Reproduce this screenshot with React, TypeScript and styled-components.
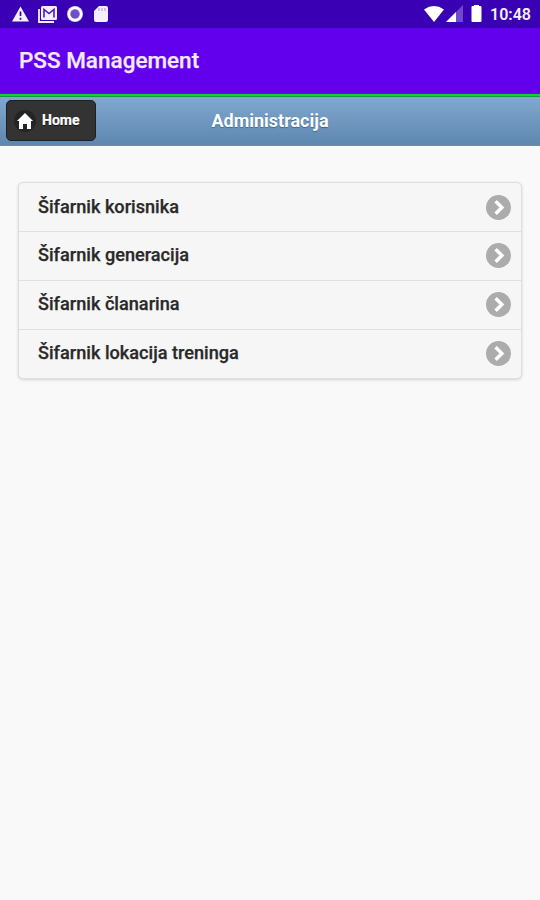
import React from "react";
import styled, { createGlobalStyle } from "styled-components";

const GlobalStyle = createGlobalStyle`
  * { box-sizing: border-box; }
  body {
    margin: 0;
    background: #f9f9f9;
    font-family: Roboto, "Liberation Sans", sans-serif;
  }
`;

const Screen = styled.div`
  min-height: 900px;
  display: flex;
  flex-direction: column;
  background: #f9f9f9;
`;

const StatusBar = styled.div`
  height: 28px;
  flex: none;
  display: flex;
  align-items: center;
  justify-content: space-between;
  padding: 0 9px 0 11px;
  background: #3a00b4;
  color: #f4efff;
`;

const StatusIcons = styled.div`
  display: flex;
  align-items: center;
  gap: 8px;

  svg { display: block; }
`;

const SystemIcons = styled(StatusIcons)`
  gap: 2px;
`;

const Clock = styled.span`
  font-size: 16px;
  line-height: 28px;
  font-weight: 600;
  width: 41px;
  margin-left: 5px;
  padding-top: 1px;
  white-space: nowrap;
`;

const AppBar = styled.header`
  height: 65px;
  flex: none;
  display: flex;
  align-items: center;
  padding: 0 19px 2px;
  background: #6200ee;
`;

const AppTitle = styled.h1`
  margin: 0;
  color: #f3eaff;
  font-size: 22.5px;
  line-height: 28px;
  font-weight: 500;
  -webkit-text-stroke: 0.25px #f3eaff;
`;

const AccentLine = styled.div`
  height: 4px;
  flex: none;
  background: linear-gradient(#3b2bb0 0 1px, #0dd430 1px 3px, #0c9a45 3px);
`;

const PageHeader = styled.div`
  height: 49px;
  flex: none;
  display: grid;
  grid-template-columns: 1fr auto 1fr;
  align-items: center;
  padding: 0 6px 1px;
  border-bottom: 1px solid #7c8b99;
  background: linear-gradient(#81a8ce, #5e87b0);
`;

const HomeButton = styled.button`
  width: 90px;
  height: 41px;
  display: flex;
  align-items: center;
  gap: 6px;
  padding: 0 0 0 7px;
  border: 1px solid #1f1f1f;
  border-radius: 5px;
  background: #333;
  color: #fff;
  font: 700 14px Roboto, sans-serif;
  text-shadow: 0 1px 0 #111;
  -webkit-text-stroke: 0.2px #fff;
`;

const HomeLabel = styled.span`
  padding-bottom: 2px;
`;

const HomeIcon = styled.span`
  width: 22px;
  height: 22px;
  display: grid;
  place-items: center;
  border-radius: 50%;
  background: #242424;
`;

const PageTitle = styled.h2`
  margin: 0;
  color: #fff;
  font-size: 18px;
  line-height: 24px;
  font-weight: 700;
  text-shadow: 0 1px 1px #3e6790;
`;

const List = styled.ul`
  margin: 36px 18px 0;
  padding: 0;
  list-style: none;
  border: 1px solid #dedede;
  border-radius: 5px;
  background: #f6f6f6;
  box-shadow: 0 1px 3px rgba(0, 0, 0, 0.15);
`;

const ListRow = styled.li<{ $height: number }>`
  height: ${(p) => p.$height}px;
  display: flex;
  align-items: center;
  justify-content: space-between;
  padding: 0 10px 2px 19px;
  color: #292929;
  font-size: 18.15px;
  font-weight: 500;
  -webkit-text-stroke: 0.25px #292929;
  text-shadow: 0 1px 0 #f3f3f3;

  & + & {
    border-top: 1px solid #e0e0e0;
    padding-bottom: 3px;
  }
`;

const Chevron = styled.span`
  width: 25px;
  height: 25px;
  margin-top: 2px;
  display: grid;
  place-items: center;
  border-radius: 50%;
  background: #acacac;
`;

const rows = [
  { label: "Šifarnik korisnika", height: 48 },
  { label: "Šifarnik generacija", height: 49 },
  { label: "Šifarnik članarina", height: 49 },
  { label: "Šifarnik lokacija treninga", height: 49 },
];

export default function App() {
  return (
    <Screen>
      <GlobalStyle />
      <StatusBar>
        <StatusIcons>
          <svg width="19" height="20" viewBox="0 0 19 20">
            <path d="M9.5 2.5 18 17.5H1Z" fill="currentColor" />
            <path d="M9.5 7.5v4.5M9.5 13.7v2" stroke="#3a00b4" strokeWidth="1.7" />
          </svg>
          <svg width="20" height="20" viewBox="0 0 20 20">
            <path d="M1 5v13h15" fill="none" stroke="currentColor" strokeWidth="1.8" />
            <rect x="3" y="2" width="16" height="14" rx="1.5" fill="currentColor" />
            <path d="M6 13.5V5.5l5 4 5-4v8" fill="none" stroke="#4b1bbb" strokeWidth="1.6" />
          </svg>
          <svg width="18" height="20" viewBox="0 0 18 20">
            <circle cx="9" cy="10" r="8" fill="#c6b7ef" />
            <circle cx="9" cy="10" r="6.2" fill="none" stroke="#fff" strokeWidth="2.4" />
            <circle cx="9" cy="10" r="4.5" fill="#6f4ec9" />
          </svg>
          <svg width="17" height="20" viewBox="0 0 17 20">
            <path d="M7 2h7a2 2 0 0 1 2 2v12a2 2 0 0 1-2 2H4a2 2 0 0 1-2-2V7Z" fill="currentColor" />
            <path d="M7 4v3M10 4v3M13 4v3" stroke="#b5a2e5" strokeWidth="1.2" />
          </svg>
        </StatusIcons>
        <SystemIcons>
          <svg width="20" height="18" viewBox="0 0 20 18">
            <path d="M0 4.4Q10-2.5 20 4.4L10 17Z" fill="#fff" />
          </svg>
          <svg width="17" height="18" viewBox="0 0 17 18">
            <path d="M17 0v17H0Z" fill="#7048cb" />
            <path d="M10 7v10H0Z" fill="#fff" />
          </svg>
          <svg width="18" height="20" viewBox="0 0 18 20">
            <path d="M9 1h5v1h1.5a1 1 0 0 1 1 1v14a1 1 0 0 1-1 1h-8a1 1 0 0 1-1-1V3a1 1 0 0 1 1-1H9Z" fill="#fff" />
          </svg>
          <Clock>10:48</Clock>
        </SystemIcons>
      </StatusBar>
      <AppBar>
        <AppTitle>PSS Management</AppTitle>
      </AppBar>
      <AccentLine />
      <PageHeader>
        <HomeButton type="button">
          <HomeIcon>
            <svg width="18" height="18" viewBox="0 0 18 18">
              <path d="m9 1 8 8h-2v8h-4v-5H7v5H3V9H1Z" fill="#fff" />
            </svg>
          </HomeIcon>
          <HomeLabel>Home</HomeLabel>
        </HomeButton>
        <PageTitle>Administracija</PageTitle>
      </PageHeader>
      <List>
        {rows.map((row) => (
          <ListRow key={row.label} $height={row.height}>
            {row.label}
            <Chevron>
              <svg width="25" height="25" viewBox="0 0 26 26">
                <path d="m10 6.5 6.5 6.5-6.5 6.5" fill="none" stroke="#fff" strokeWidth="3.6" />
              </svg>
            </Chevron>
          </ListRow>
        ))}
      </List>
    </Screen>
  );
}
